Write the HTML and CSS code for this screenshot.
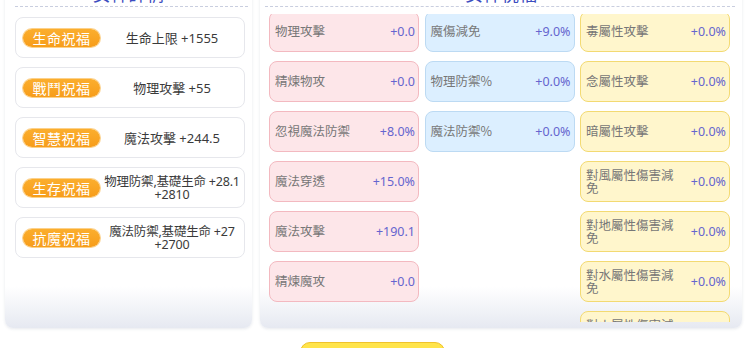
FILE: index.html
```html
<!DOCTYPE html>
<html lang="zh-Hant">
<head>
<meta charset="utf-8">
<title>女神祝福</title>
<link rel="stylesheet" href="styles.css">
</head>
<body>
<div class="page">
  <section class="panel panel-left">
    <h2 class="title">女神詳情</h2>
    <div class="divider"></div>
    <div class="bless-list">
      <div class="bless-card"><span class="badge">生命祝福</span><span class="bless-text">生命上限 +1555</span></div>
      <div class="bless-card"><span class="badge">戰鬥祝福</span><span class="bless-text">物理攻擊 +55</span></div>
      <div class="bless-card"><span class="badge">智慧祝福</span><span class="bless-text">魔法攻擊 +244.5</span></div>
      <div class="bless-card"><span class="badge">生存祝福</span><span class="bless-text small">物理防禦,基礎生命 +28.1 +2810</span></div>
      <div class="bless-card"><span class="badge">抗魔祝福</span><span class="bless-text small">魔法防禦,基礎生命 +27 +2700</span></div>
    </div>
  </section>
  <section class="panel panel-right">
    <h2 class="title">女神祝福</h2>
    <div class="divider"></div>
    <div class="scroll">
      <div class="cols">
        <div class="col">
          <div class="stat pink"><span class="label">物理攻擊</span><span class="value">+0.0</span></div>
          <div class="stat pink"><span class="label">精煉物攻</span><span class="value">+0.0</span></div>
          <div class="stat pink"><span class="label">忽視魔法防禦</span><span class="value">+8.0%</span></div>
          <div class="stat pink"><span class="label">魔法穿透</span><span class="value">+15.0%</span></div>
          <div class="stat pink"><span class="label">魔法攻擊</span><span class="value">+190.1</span></div>
          <div class="stat pink"><span class="label">精煉魔攻</span><span class="value">+0.0</span></div>
        </div>
        <div class="col">
          <div class="stat blue"><span class="label">魔傷減免</span><span class="value">+9.0%</span></div>
          <div class="stat blue"><span class="label">物理防禦%</span><span class="value">+0.0%</span></div>
          <div class="stat blue"><span class="label">魔法防禦%</span><span class="value">+0.0%</span></div>
        </div>
        <div class="col">
          <div class="stat yellow"><span class="label">毒屬性攻擊</span><span class="value">+0.0%</span></div>
          <div class="stat yellow"><span class="label">念屬性攻擊</span><span class="value">+0.0%</span></div>
          <div class="stat yellow"><span class="label">暗屬性攻擊</span><span class="value">+0.0%</span></div>
          <div class="stat yellow"><span class="label">對風屬性傷害減免</span><span class="value">+0.0%</span></div>
          <div class="stat yellow"><span class="label">對地屬性傷害減免</span><span class="value">+0.0%</span></div>
          <div class="stat yellow"><span class="label">對水屬性傷害減免</span><span class="value">+0.0%</span></div>
          <div class="stat yellow"><span class="label">對火屬性傷害減免</span><span class="value">+0.0%</span></div>
          <div class="stat yellow"><span class="label">對光屬性傷害減免</span><span class="value">+0.0%</span></div>
        </div>
      </div>
    </div>
  </section>
</div>
<div class="footer">
  <button class="btn" type="button">確定</button>
</div>
</body>
</html>
```
FILE: styles.css
```css
* { box-sizing: border-box; }
html, body { margin: 0; padding: 0; }
body {
  background: #ffffff;
  font-family: "Noto Sans", "Noto Sans CJK TC", sans-serif;
  width: 750px;
  height: 348px;
  overflow: hidden;
}
.page {
  display: flex;
  gap: 8px;
  padding-left: 5px;
  margin-top: -18px;
}
.panel {
  height: 346px;
  border-radius: 8px;
  background: linear-gradient(to bottom, #ffffff 0%, #ffffff 88%, #e6e9f1 100%);
  box-shadow: 0 1px 3px rgba(60, 70, 110, 0.12);
  display: flex;
  flex-direction: column;
  overflow: hidden;
}
.panel-left { width: 247px; }
.panel-right { width: 482px; }
.title {
  margin: 0;
  height: 24px;
  line-height: 24px;
  font-size: 18px;
  font-weight: 400;
  color: #3b4cc0;
  text-align: center;
}
.divider {
  border-bottom: 1px dashed #c9cedf;
  height: 1px;
}
.panel-left .divider { margin: 0 4px 0 10px; }
.panel-right .divider { margin: 0 7px 0 5px; }

.bless-list {
  display: flex;
  flex-direction: column;
  gap: 9px;
  padding: 10px 7px 0 10px;
}
.bless-card {
  height: 41px;
  border: 1px solid #e6e7ec;
  border-radius: 8px;
  background: #fff;
  display: flex;
  align-items: center;
  padding-left: 7px;
}
.badge {
  width: 77px;
  height: 18px;
  border-radius: 9px;
  background: linear-gradient(to bottom, #fbae2e, #f79d1a);
  box-shadow: 0 0 0 1px #fcd18a;
  color: #fff;
  font-family: "Noto Sans CJK TC", sans-serif;
  font-size: 14px;
  letter-spacing: 0.5px;
  line-height: 18px;
  text-align: center;
  flex: none;
}
.bless-text {
  flex: 1;
  text-align: center;
  color: #3a3a3a;
  font-size: 13px;
  line-height: 14px;
  padding: 0 4px 0 4px;
}
.bless-text.small {
  font-size: 12.5px;
  line-height: 13px;
  letter-spacing: -0.2px;
}

.scroll {
  margin: 7px 0 0 9px;
  height: 308px;
  overflow: hidden;
}
.cols {
  display: flex;
  gap: 5.5px;
  margin-top: -3px;
}
.col {
  width: 150px;
  display: flex;
  flex-direction: column;
  gap: 9px;
}
.stat {
  height: 41px;
  border-radius: 8px;
  border: 1.5px solid;
  display: flex;
  align-items: center;
  justify-content: space-between;
  padding: 0 3px 0 5px;
  font-size: 12.5px;
}
.stat.pink { background: #fde6e9; border-color: #f3b9c0; }
.stat.blue { background: #dcefff; border-color: #bcdaf3; }
.stat.yellow { background: #fff6cc; border-color: #f3da72; }
.label {
  color: #777;
  line-height: 12.5px;
  max-width: 92px;
  font-family: "Noto Sans CJK TC", sans-serif;
}
.value {
  color: #6565cf;
  flex: none;
}

.footer {
  display: flex;
  justify-content: center;
  padding-right: 5px;
  margin-top: 14px;
}
.btn {
  width: 145px;
  height: 40px;
  border-radius: 10px;
  border: 1.5px solid #efc22c;
  background: #ffe44a;
  color: #6b4a00;
  font-family: "Noto Sans CJK TC", sans-serif;
  font-size: 16px;
}
```
